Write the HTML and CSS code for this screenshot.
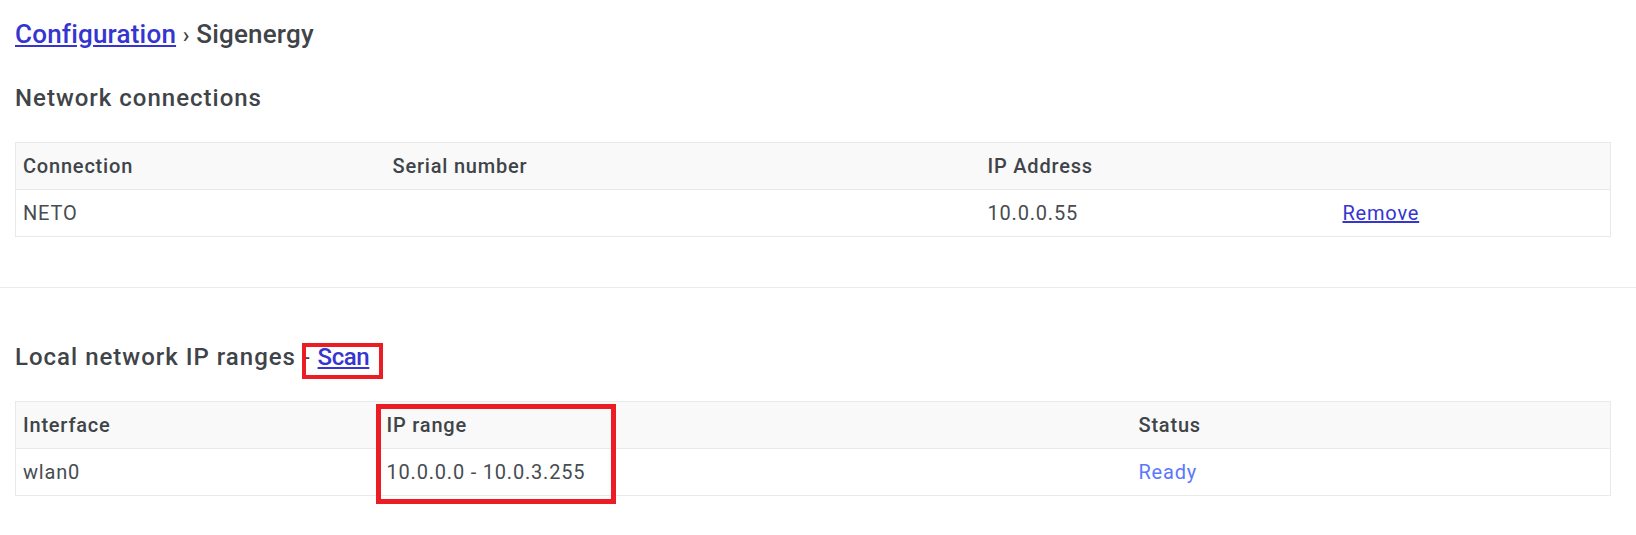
FILE: index.html
```html
<!DOCTYPE html>
<html lang="en">
<head>
<meta charset="utf-8">
<title>Sigenergy configuration</title>
<link rel="stylesheet" href="styles.css">
</head>
<body>
<div class="page">
  <section class="section">
    <h1 class="crumbs"><a href="#" class="link">Configuration</a> <span class="sep">›</span> Sigenergy</h1>
    <h2 class="title">Network connections</h2>
    <table class="grid grid-conn">
      <colgroup>
        <col class="c-conn"><col class="c-serial"><col class="c-ip"><col class="c-act">
      </colgroup>
      <thead>
        <tr><th>Connection</th><th>Serial number</th><th>IP Address</th><th></th></tr>
      </thead>
      <tbody>
        <tr><td>NETO</td><td></td><td>10.0.0.55</td><td><a href="#" class="link">Remove</a></td></tr>
      </tbody>
    </table>
  </section>
  <hr class="rule">
  <section class="section">
    <div class="heading-wrap">
      <h2 class="title title-ranges">Local network IP ranges <span class="dash">-</span> <a href="#" class="link scan-link">Scan</a></h2>
      <div class="mark mark-scan"></div>
    </div>
    <div class="table-wrap">
      <table class="grid grid-ranges">
        <colgroup>
          <col class="c-if"><col class="c-range"><col class="c-status">
        </colgroup>
        <thead>
          <tr><th>Interface</th><th>IP range</th><th>Status</th></tr>
        </thead>
        <tbody>
          <tr><td>wlan0</td><td>10.0.0.0 - 10.0.3.255</td><td class="status-ready">Ready</td></tr>
        </tbody>
      </table>
      <div class="mark mark-range"></div>
    </div>
  </section>
</div>
</body>
</html>
```

FILE: styles.css
```css
html, body {
  margin: 0;
  padding: 0;
  background: #ffffff;
}

html {
  height: 100%;
}

body {
  min-height: 100vh;
  font-family: Roboto, "Noto Sans", "Liberation Sans", sans-serif;
  color: #3f4449;
}

.page {
  padding-top: 18px;
  padding-bottom: 40px;
}

.section {
  padding: 0 15px;
}

.crumbs {
  margin: 0;
  font-size: 26px;
  line-height: 32px;
  font-weight: 500;
  letter-spacing: 0.2px;
  color: #3f4449;
}

.sep {
  font-size: 22px;
  line-height: 1;
}

.link {
  color: #3535d0;
  text-decoration: underline;
}

.title {
  margin: 34px 0 0 0;
  font-size: 24px;
  line-height: 28px;
  font-weight: 500;
  letter-spacing: 1px;
  color: #3f4449;
}

.scan-link {
  letter-spacing: -0.4px;
}

.grid {
  border-collapse: collapse;
  table-layout: fixed;
  font-size: 20px;
  letter-spacing: 0.8px;
  width: 1595px;
}

.grid th,
.grid td {
  height: 46px;
  padding: 0 7px;
  border-top: 1px solid #e9e9e9;
  border-bottom: 1px solid #e9e9e9;
  text-align: left;
  vertical-align: middle;
  white-space: nowrap;
}

.grid th:first-child,
.grid td:first-child {
  border-left: 1px solid #e9e9e9;
}

.grid th:last-child,
.grid td:last-child {
  border-right: 1px solid #e9e9e9;
}

.grid th {
  background: #f9f9f9;
  font-weight: 500;
  color: #3f4449;
}

.grid td {
  font-weight: 400;
  color: #474c51;
}

.grid td.status-ready {
  color: #5b77ff;
}

.grid-conn {
  margin-top: 30px;
}

.c-conn { width: 370px; }
.c-serial { width: 595px; }
.c-ip { width: 355px; }
.c-act { width: 275px; }

.rule {
  margin: 50px 0 0 0;
  border: none;
  border-top: 1px solid #ebebeb;
  height: 0;
}

.heading-wrap {
  position: relative;
  margin-top: 55px;
}

.title-ranges {
  margin-top: 0;
}

.dash {
  font-weight: 400;
}

.table-wrap {
  position: relative;
  margin-top: 30px;
}

.c-if { width: 364px; }
.c-range { width: 752px; }
.c-status { width: 479px; }

.mark {
  position: absolute;
  border: 4px solid #ec1c24;
  box-sizing: border-box;
  pointer-events: none;
}

.mark-scan {
  left: 287px;
  top: 0;
  width: 81px;
  height: 36px;
}

.mark-range {
  left: 361px;
  top: 3px;
  width: 240px;
  height: 100px;
  border-width: 5px;
}
```
